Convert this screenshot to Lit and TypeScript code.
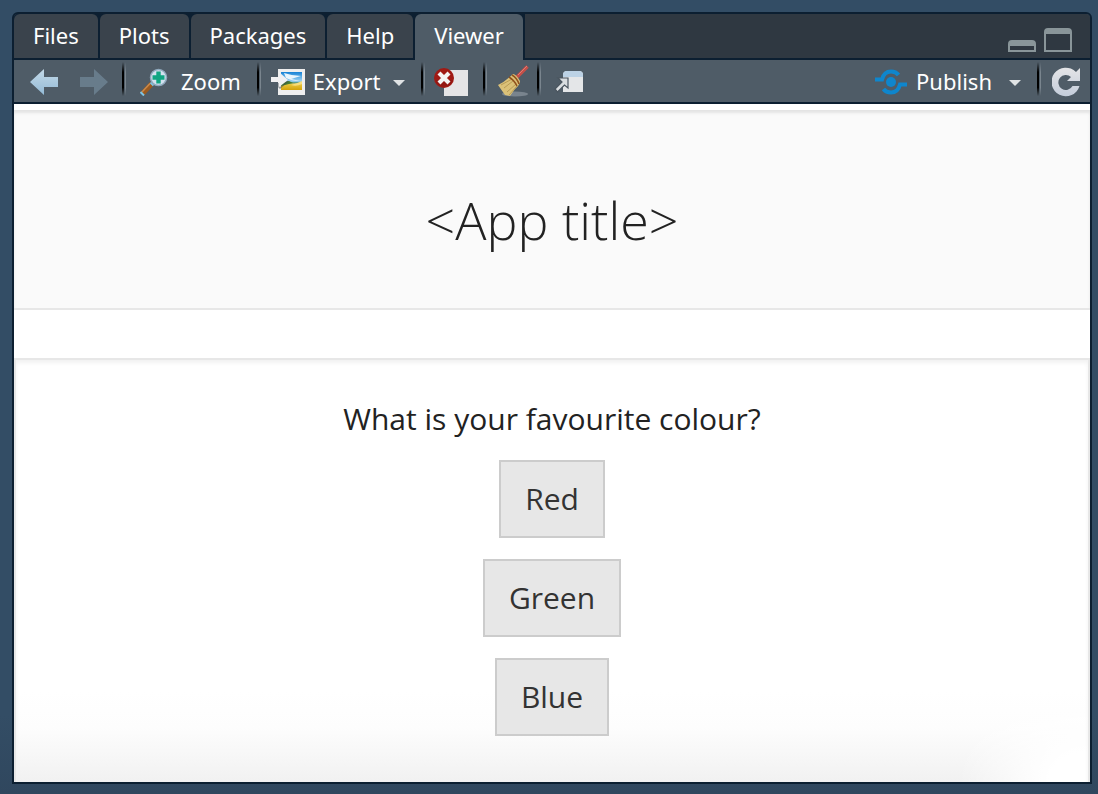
import { LitElement, html, css, svg } from "lit";
import { customElement, property, state } from "lit/decorators.js";
import { classMap } from "lit/directives/class-map.js";

const icons = {
  back: svg`<svg width="30" height="28" viewBox="0 0 30 28"><defs><linearGradient id="g" x1="0" y1="0" x2="0" y2="1"><stop offset="0" stop-color="#c3d9e8"/><stop offset="1" stop-color="#93bad6"/></linearGradient></defs><path d="M1 14 15 1v8h14v10H15v8z" fill="url(#g)"/></svg>`,
  forward: svg`<svg width="30" height="28" viewBox="0 0 30 28"><path d="M29 14 15 1v8H1v10h14v8z" fill="#687c8b"/></svg>`,
  zoom: svg`<svg width="28" height="28" viewBox="0 0 28 28"><path d="M2 26 12 15.500" stroke="#9a5a20" stroke-width="5"/><path d="M2 24 10 15.500" stroke="#c98a4c" stroke-width="1.500"/><path d="M.5 24 4 27.500M10.500 14.500l3 3" stroke="#7cc4e6" stroke-width="2"/><circle cx="18.500" cy="9.500" r="8" fill="#d3e1ef" stroke="#8fa9bd" stroke-width="1.500"/><path d="M18.500 3.500v12M12.500 9.500h12" stroke="#10a582" stroke-width="4.400"/></svg>`,
  image: svg`<svg width="34" height="26" viewBox="0 0 34 26"><defs><linearGradient id="s" x1="0" y1="0" x2="0" y2="1"><stop offset="0" stop-color="#1682d6"/><stop offset=".52" stop-color="#9fd4f3"/><stop offset=".56" stop-color="#3b96a5"/><stop offset=".68" stop-color="#e8c53c"/><stop offset="1" stop-color="#d3a30b"/></linearGradient></defs><path d="M7 0h27v26H7z" fill="#eee"/><path d="M10 3h21v18H10z" fill="url(#s)"/><path d="M13 4q9 3 17 3-7 2-10 3 5 1 9 2-8 0-14-3z" fill="#e9f5fc"/><path d="m10 13 8-1 4 2-12 3z" fill="#477b31"/><path d="M20 16q7-2 11-4v3q-6 3-11 1z" fill="#f7dd7d"/><path d="M8 14v4l1 1 8-7" stroke="#3d4852" stroke-width="1.500" fill="none" opacity=".5"/><path d="M0 8h8V3l9 8-9 7v-5H0z" fill="#f0f0f2"/></svg>`,
  clear: svg`<svg width="34" height="28" viewBox="0 0 34 28"><path d="M10 2h24v26H10z" fill="#e5e5e6"/><circle cx="10" cy="10" r="10" fill="#a01a14"/><path d="M1 12a9.500 9.500 0 0 0 18 0z" fill="#861410" opacity=".5"/><path d="m5 5 10 10M15 5 5 15" stroke="#f4f4f4" stroke-width="4.200"/></svg>`,
  broom: svg`<svg width="32" height="32" viewBox="0 0 32 32"><ellipse cx="18" cy="29" rx="13" ry="2.500" fill="#87929b" opacity=".75"/><path d="M20 12 30.500 1.500" stroke="#c44f48" stroke-width="3.500"/><path d="m21 10 9-9" stroke="#df7c74" stroke-width="1"/><path d="M16 9q3 0 7 7 0 4-5 8l-5 7-5-1-7-10q7-3 15-11z" fill="#dbc178"/><path d="m4 20 11-6M7 23l9-7M10 27l9-8M12 30l8-9" stroke="#b89b55" stroke-width="1"/><path d="M12 12q5 3 8 9M15 10q5 3 7 9" fill="none" stroke="#91521c" stroke-width="1.500"/></svg>`,
  popout: svg`<svg width="30" height="22" viewBox="0 0 30 22"><path d="M9 21V4q0-4 4-4h12q4 0 4 4v17z" fill="#e4e6e8"/><path d="M9 6V4q0-4 4-4h12q4 0 4 4v2z" fill="#bcd2e5"/><path d="M14 7v10l-3.500-3-7 7L1 18l7-7-4-4z" fill="#d9dde0" stroke="#4a555f" stroke-width="1.200"/></svg>`,
  publish: svg`<svg width="32" height="26" viewBox="0 0 32 26"><circle cx="16" cy="13" r="5" fill="#0e86cd"/><path d="M0 10.500h7Q9 2.500 16 2.500q5 0 7.500 3.500M32 15.500h-7Q23 23.500 16 23.500q-5 0-7.500-3.500" fill="none" stroke="#0e86cd" stroke-width="4"/></svg>`,
  refresh: svg`<svg width="28" height="30" viewBox="0 0 28 30"><defs><linearGradient id="r" x1="0" y1="0" x2="0" y2="1"><stop offset="0" stop-color="#e4e4e6"/><stop offset="1" stop-color="#c4cddb"/></linearGradient></defs><path d="M28 1v13H15l4-4A7.500 7.500 0 1 0 20.500 19h7A14.300 14.300 0 1 1 24 5z" fill="url(#r)"/></svg>`,
  caret: svg`<svg width="12" height="6" viewBox="0 0 12 6"><path d="M0 0h12L6 6z" fill="#e0e3e5"/></svg>`,
  minimize: svg`<svg width="28" height="12" viewBox="0 0 28 12"><path fill-rule="evenodd" d="M0 12V4q0-4 4-4h20q4 0 4 4v8zM2 6v4h24V6z" fill="#899599"/></svg>`,
  maximize: svg`<svg width="28" height="24" viewBox="0 0 28 24"><path fill-rule="evenodd" d="M0 24V4q0-4 4-4h20q4 0 4 4v20zM2 6v16h24V6z" fill="#899599"/></svg>`,
};

@customElement("pane-toolbar")
class PaneToolbar extends LitElement {
  static styles = css`
    :host {
      display: flex;
      align-items: center;
      height: 42px;
      padding: 0 10px 0 15px;
      background: #4f5c67;
      border-bottom: 2px solid #0c1f31;
    }
    button {
      display: flex;
      align-items: center;
      flex: none;
      height: 42px;
      padding: 0;
      border: 0;
      background: none;
      color: #fff;
      font: 22px/30px "Noto Sans", "Open Sans", sans-serif;
    }
    svg {
      display: block;
      flex: none;
      margin-top: 2px;
    }
    .nav {
      display: flex;
      gap: 20px;
      margin-right: 13px;
    }
    .sep {
      flex: none;
      width: 4px;
      height: 34px;
      margin-bottom: 4px;
      background: linear-gradient(90deg, #000 2px, #4f5c67 2px, #4f5c67 3px, #7a858e 3px);
      mask-image: linear-gradient(transparent, #000 30%, #000 75%, transparent);
    }
    .zoom {
      gap: 13px;
      margin: 0 16px 0 14px;
    }
    .export {
      gap: 8px;
      margin: 0 16px 0 10px;
    }
    .remove {
      margin: 0 15px 0 9px;
    }
    .clear {
      margin: 0 8px 0 10px;
    }
    .clear svg {
      margin-top: 0;
    }
    .pop {
      margin-left: 13px;
    }
    .publish {
      gap: 9px;
      margin: 0 16px 0 auto;
    }
    .refresh {
      margin-left: 11px;
    }
    .caret {
      padding: 1px 0 0 4px;
    }
    .publish .caret {
      padding-left: 8px;
    }
  `;

  render() {
    const sep = html`<span class="sep"></span>`;
    return html`
      <div class="nav">
        <button aria-label="Back">${icons.back}</button>
        <button aria-label="Forward">${icons.forward}</button>
      </div>
      ${sep}
      <button class="zoom">${icons.zoom}<span>Zoom</span></button>
      ${sep}
      <button class="export">${icons.image}<span>Export</span><span class="caret">${icons.caret}</span></button>
      ${sep}
      <button class="remove" aria-label="Remove current item">${icons.clear}</button>
      ${sep}
      <button class="clear" aria-label="Clear all items">${icons.broom}</button>
      ${sep}
      <button class="pop" aria-label="Show in new window">${icons.popout}</button>
      <button class="publish">${icons.publish}<span>Publish</span><span class="caret">${icons.caret}</span></button>
      ${sep}
      <button class="refresh" aria-label="Refresh">${icons.refresh}</button>
    `;
  }
}

@customElement("survey-page")
class SurveyPage extends LitElement {
  @property({ type: Array }) choices = ["Red", "Green", "Blue"];

  static styles = css`
    :host {
      display: flex;
      flex-direction: column;
      flex: 1;
      padding-top: 6px;
      background: #fff;
      color: #222;
      font-family: "Open Sans", "Noto Sans", sans-serif;
    }
    .banner {
      box-sizing: border-box;
      height: 200px;
      padding-top: 74px;
      border-bottom: 2px solid #e7e7e7;
      background: #fafafa;
      box-shadow: inset 0 3px 3px #e4e4e4;
      text-align: center;
    }
    h1 {
      margin: 0;
      font-size: 52px;
      line-height: 72px;
      font-weight: 300;
    }
    .card {
      flex: 1;
      display: flex;
      flex-direction: column;
      align-items: center;
      margin-top: 48px;
      padding: 38px 20px 44px;
      border: 2px solid #e7e7e7;
      border-bottom: 0;
      background:
        radial-gradient(ellipse 130px 100px at 100% 100%, #fff 30%, transparent),
        linear-gradient(#fff, #fdfdfd 40%, #f1f1f1) bottom / 100% 90px no-repeat #fff;
      box-shadow: inset 0 3px 4px #f2f2f2;
    }
    p {
      margin: 0 0 20px;
      font-size: 30px;
      line-height: 42px;
    }
    .choices {
      display: flex;
      flex-direction: column;
      align-items: center;
      gap: 21px;
    }
    button {
      height: 78px;
      padding: 0 24px;
      border: 2px solid #ccc;
      border-radius: 0;
      background: #e7e7e7;
      color: #333;
      font: 30px/42px "Open Sans", "Noto Sans", sans-serif;
    }
  `;

  render() {
    return html`
      <header class="banner"><h1>&lt;App title&gt;</h1></header>
      <section class="card">
        <p>What is your favourite colour?</p>
        <div class="choices">${this.choices.map((c) => html`<button>${c}</button>`)}</div>
      </section>
    `;
  }
}

@customElement("app-root")
class AppRoot extends LitElement {
  @state() active = "Viewer";

  static styles = css`
    :host {
      display: flex;
      box-sizing: border-box;
      min-height: 100vh;
      padding: 12px 6px 10px 12px;
      background: linear-gradient(#334d65 90%, #30475e);
    }
    .pane {
      flex: 1;
      display: flex;
      flex-direction: column;
      border: 2px solid #0c1f31;
      border-radius: 6px 6px 0 0;
      overflow: hidden;
    }
    .head {
      display: flex;
      height: 46px;
      background: linear-gradient(#0c1f31, #0c1f31) bottom / 100% 2px no-repeat #2f3841;
    }
    .tabs {
      display: flex;
      flex: none;
      gap: 2px;
      padding-right: 2px;
      background: #0c1f31;
    }
    .tab {
      height: 44px;
      padding: 0 19px 2px;
      border: 0;
      border-radius: 6px 6px 0 0;
      background: #3a434c;
      color: #fff;
      font: 22px/30px "Noto Sans", "Open Sans", sans-serif;
    }
    .active {
      height: 46px;
      padding-bottom: 4px;
      background: #4f5c67;
    }
    .window {
      display: flex;
      align-items: flex-end;
      gap: 8px;
      margin: 0 18px 8px auto;
    }
    .window button {
      padding: 0;
      border: 0;
      background: none;
    }
    .window svg {
      display: block;
    }
  `;

  render() {
    return html`
      <main class="pane">
        <div class="head">
          <nav class="tabs" role="tablist">
            ${["Files", "Plots", "Packages", "Help", "Viewer"].map(
              (name) => html`<button
                role="tab"
                aria-selected=${name === this.active}
                class=${classMap({ tab: true, active: name === this.active })}
                @click=${() => (this.active = name)}
              >${name}</button>`
            )}
          </nav>
          <div class="window">
            <button aria-label="Minimize">${icons.minimize}</button>
            <button aria-label="Maximize">${icons.maximize}</button>
          </div>
        </div>
        <pane-toolbar></pane-toolbar>
        <survey-page></survey-page>
      </main>
    `;
  }
}
